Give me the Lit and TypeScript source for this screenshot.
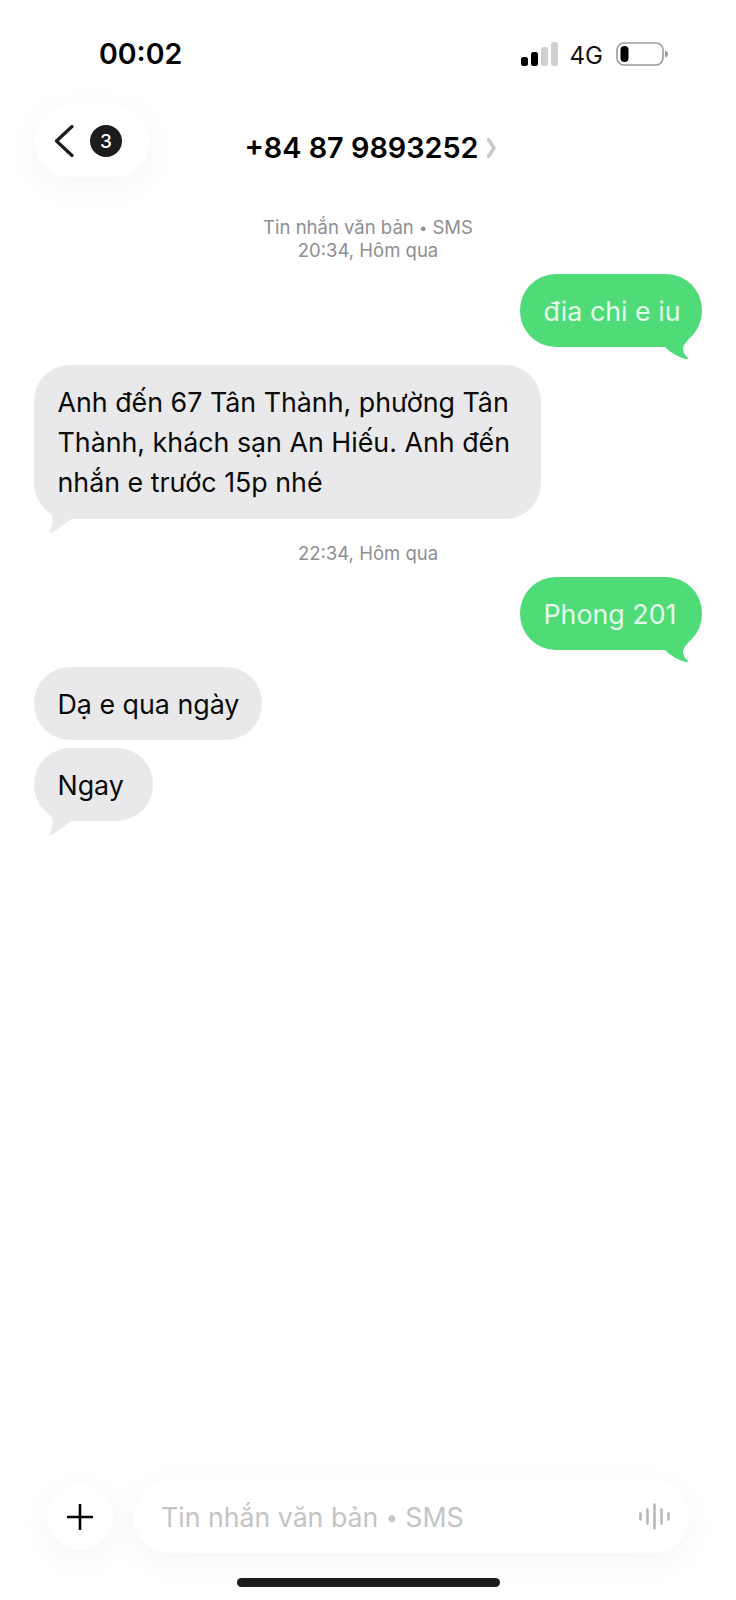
import { LitElement, html, css, svg } from "lit";
import { customElement } from "lit/decorators.js";

const greenTail = svg`<path d="M0 0 H27 C24 3 21.5 6 21 9 C21 13 22.5 16 25.5 18.5 C26.5 19.7 25.5 20.7 24 20.2 C16 18 9 14 3 8 L0 8 Z" fill="#4fdc78"/>`;
const grayTail = svg`<path d="M2 0 C4 4 7 8 8.5 10 C9 16 8 21 5.5 25.5 C5 27 6 27.5 7.5 26.8 C14 24 20 17 28 13 L30 0 Z" fill="#e9e9eb"/>`;

@customElement("app-root")
export class AppRoot extends LitElement {
  static styles = css`
    :host {
      display: flex;
      flex-direction: column;
      width: 736px;
      height: 1600px;
      background: #fff;
      font-family: Inter, "Noto Sans", "Liberation Sans", sans-serif;
      color: #000;
      overflow: hidden;
    }
    .status {
      height: 105px;
      box-sizing: border-box;
      padding: 36px 68px 0 99px;
      display: flex;
      justify-content: space-between;
      align-items: flex-start;
    }
    .time {
      font-size: 28.5px;
      font-weight: 600;
      line-height: 36px;
      letter-spacing: 0;
    }
    .status-right {
      display: flex;
      align-items: center;
      height: 36px;
    }
    .net {
      font-size: 24px;
      line-height: 36px;
      margin: 3px 13px 0 12px;
      color: #111;
    }
    .header {
      display: grid;
      grid-template-columns: 1fr auto 1fr;
      align-items: center;
      height: 72px;
      padding: 0 34px;
    }
    .back {
      width: 116px;
      height: 72px;
      border-radius: 36px;
      background: #fff;
      box-shadow: 0 8px 36px rgba(0, 0, 0, 0.045);
      display: flex;
      align-items: center;
      box-sizing: border-box;
      padding-left: 20px;
      gap: 16px;
    }
    .badge {
      width: 32px;
      height: 32px;
      border-radius: 50%;
      background: #1c1c1e;
      color: #fff;
      font-size: 19px;
      font-weight: 500;
      display: flex;
      align-items: center;
      justify-content: center;
    }
    .title {
      display: flex;
      align-items: center;
      gap: 8px;
      font-size: 28.8px;
      font-weight: 600;
      margin-top: 13px;
      margin-left: 4px;
      white-space: nowrap;
    }
    .thread {
      flex: 1;
      display: flex;
      flex-direction: column;
      padding: 39px 34px 0;
    }
    .stamp {
      text-align: center;
      font-size: 18.5px;
      line-height: 23px;
      color: #8e8e93;
    }
    .dot {
      font-size: 0.8em;
      line-height: 0;
      vertical-align: 0.08em;
    }
    .bubble {
      position: relative;
      box-sizing: border-box;
      padding: 16.5px 23.5px;
      font-size: 26.8px;
      line-height: 40px;
      border-radius: 36px;
      white-space: nowrap;
    }
    .bubble svg {
      position: absolute;
      overflow: visible;
    }
    .out {
      align-self: flex-end;
      width: 182px;
      background: #4fdc78;
      color: #e4fbe9;
    }
    .out svg {
      right: 0;
      bottom: -16px;
    }
    .in {
      background: #e9e9eb;
      color: #0a0a0a;
    }
    .in svg {
      left: 10px;
      bottom: -14px;
    }
    .wide {
      width: 507px;
      white-space: normal;
      padding-right: 20px;
      padding-bottom: 17.5px;
    }
    .da {
      width: 228px;
    }
    .ngay {
      width: 119px;
    }
    .mt-stamp {
      margin-top: 23px;
    }
    .mt-12 {
      margin-top: 12px;
    }
    .mt-17 {
      margin-top: 17px;
    }
    .mt-18 {
      margin-top: 18px;
    }
    .mt-8 {
      margin-top: 8px;
    }
    .composer {
      display: flex;
      align-items: center;
      height: 73px;
      padding: 0 47px;
      gap: 21px;
    }
    .plus {
      width: 66px;
      height: 66px;
      flex: none;
      border-radius: 50%;
      background: #fff;
      box-shadow: 0 8px 36px rgba(0, 0, 0, 0.045);
      display: flex;
      align-items: center;
      justify-content: center;
    }
    .field {
      flex: 1;
      height: 73px;
      border-radius: 36px;
      background: #fff;
      box-shadow: 0 8px 36px rgba(0, 0, 0, 0.045);
      display: flex;
      align-items: center;
      justify-content: space-between;
      box-sizing: border-box;
      padding: 0 19px 0 27px;
      font-size: 26.7px;
      color: #c4c4c6;
    }
    .home-wrap {
      height: 47px;
      box-sizing: border-box;
      padding-top: 25px;
      display: flex;
      justify-content: center;
    }
    .home {
      width: 263px;
      height: 9px;
      border-radius: 5px;
      background: #1c1c1e;
    }
  `;

  render() {
    return html`
      <div class="status">
        <div class="time">00:02</div>
        <div class="status-right">
          <svg width="37" height="24" viewBox="0 0 37 24">
            <rect x="0" y="15" width="7" height="9" rx="2.5" fill="#000"/>
            <rect x="10" y="10" width="7" height="14" rx="2.5" fill="#000"/>
            <rect x="20" y="5" width="7" height="19" rx="2.5" fill="#d0d0d0"/>
            <rect x="30" y="0" width="7" height="24" rx="2.5" fill="#d0d0d0"/>
          </svg>
          <span class="net">4G</span>
          <svg width="52" height="24" viewBox="0 0 52 24">
            <rect x="1" y="1" width="46" height="22" rx="7" fill="#fff" stroke="#9a9a9a" stroke-width="1.6"/>
            <rect x="4.5" y="4" width="8" height="16" rx="4" fill="#000"/>
            <path d="M49 8.5 C51 9.5 52 10.5 52 12 C52 13.5 51 14.5 49 15.5 Z" fill="#9a9a9a"/>
          </svg>
        </div>
      </div>

      <div class="header">
        <div class="back">
          <svg width="20" height="32" viewBox="0 0 20 32">
            <path d="M18 1.5 L2.5 16 L18 30.5" fill="none" stroke="#1c1c1e" stroke-width="3.2" stroke-linecap="round" stroke-linejoin="round"/>
          </svg>
          <div class="badge">3</div>
        </div>
        <div class="title">
          <span>+84 87 9893252</span>
          <svg width="9" height="20" viewBox="0 0 9 20">
            <path d="M1.5 1.5 L7 10 L1.5 18.5" fill="none" stroke="#c8c8c8" stroke-width="3.4" stroke-linecap="round" stroke-linejoin="round"/>
          </svg>
        </div>
        <div></div>
      </div>

      <div class="thread">
        <div class="stamp">Tin nhắn văn bản <span class="dot">•</span> SMS<br />20:34, Hôm qua</div>
        <div class="bubble out mt-12">
          đia chi e iu
          <svg width="40" height="24" viewBox="0 0 40 24">${greenTail}</svg>
        </div>
        <div class="bubble in wide mt-18">
          Anh đến 67 Tân Thành, phường Tân Thành, khách sạn An Hiếu. Anh đến nhắn e trước 15p nhé
          <svg width="30" height="27" viewBox="0 0 30 27">${grayTail}</svg>
        </div>
        <div class="stamp mt-stamp">22:34, Hôm qua</div>
        <div class="bubble out mt-12">
          Phong 201
          <svg width="40" height="24" viewBox="0 0 40 24">${greenTail}</svg>
        </div>
        <div class="bubble in da mt-17">Dạ e qua ngày</div>
        <div class="bubble in ngay mt-8">
          Ngay
          <svg width="30" height="27" viewBox="0 0 30 27">${grayTail}</svg>
        </div>
      </div>

      <div class="composer">
        <div class="plus">
          <svg width="26" height="26" viewBox="0 0 26 26">
            <path d="M13 1 V25 M1 13 H25" stroke="#000" stroke-width="2.6" stroke-linecap="round"/>
          </svg>
        </div>
        <div class="field">
          <span>Tin nhắn văn bản <span class="dot">•</span> SMS</span>
          <svg width="31" height="27" viewBox="0 0 31 27">
            <path d="M1.5 10.5 V16.5 M8.5 6.5 V20.5 M15.5 1.5 V25.5 M22.5 6.5 V20.5 M29.5 10.5 V16.5" fill="none" stroke="#b8b8ba" stroke-width="2.6" stroke-linecap="round"/>
          </svg>
        </div>
      </div>
      <div class="home-wrap"><div class="home"></div></div>
    `;
  }
}
